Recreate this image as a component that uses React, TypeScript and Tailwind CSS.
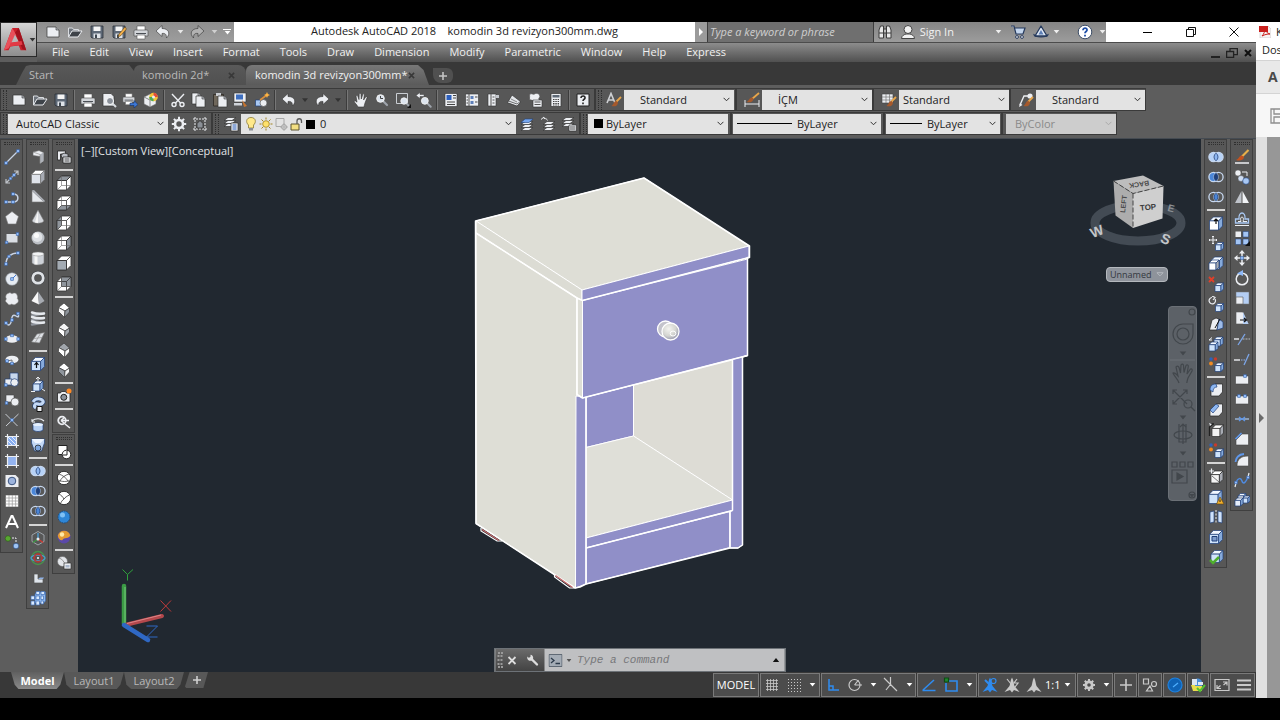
import type { ReactNode } from "react";

const W = "#eceef2";
const B = "#a9c8f2";
const N = "#1f3f78";

// small isometric solid used by most of the modeling icons
const Box = ({ x = 2, y = 2, s = 12, top = "#ffffff", front = "#dfe3ea", side = "#a7abb3", line = "#2b2b2b" }: any) => {
  const d = s * 0.3;
  return (
    <g stroke={line} strokeWidth=".7" strokeLinejoin="round">
      <path d={`M${x} ${y + d}l${d} ${-d}h${s - d}l${-d} ${d}z`} fill={top} />
      <path d={`M${x} ${y + d}h${s - d}v${s - d}h${-(s - d)}z`} fill={front} />
      <path d={`M${x + s - d} ${y + d}l${d} ${-d}v${s - d}l${-d} ${d}z`} fill={side} />
    </g>
  );
};

const BlueBox = (p: any) => <Box top="#f2f8ff" front="#cfe3fa" side="#86aadb" line={N} {...p} />;

const ViewBox3d = ({ face }: { face: string }) => (
  <g stroke="#333" strokeWidth=".8" strokeLinejoin="round">
    <path d="M1 5.500L5.500 1H15v9.500L10.500 15H1z" fill="#fff" />
    {face === "top" && <path d="M1 5.500L5.500 1H15l-4.500 4.500z" fill="#8f959c" />}
    {face === "bottom" && <path d="M1 15l4.500-4.500H15L10.500 15z" fill="#8f959c" />}
    {face === "left" && <path d="M1 5.500L5.500 1v9.500L1 15z" fill="#8f959c" />}
    {face === "right" && <path d="M10.500 5.500L15 1v9.500L10.500 15z" fill="#8f959c" />}
    {face === "front" && <path d="M1 5.500h9.500V15H1z" fill="#a3abb3" />}
    {face === "back" && <path d="M5.500 1H15v9.500H5.500z" fill="#8f959c" />}
    <path d="M1 5.500h9.500V15M10.500 5.500L15 1" fill="none" />
    {face !== "front" && <path d="M5.500 1v9.500H15M5.500 10.500L1 15" fill="none" stroke="#666" strokeWidth=".6" />}
  </g>
);

const Iso = ({ a, b, c }: { a: string; b: string; c: string }) => (
  <g stroke="#3a3a3a" strokeWidth=".7" strokeLinejoin="round">
    <path d="M8 1l5.500 5L9 9 2.500 5.500z" fill={a} />
    <path d="M2.500 5.500L9 9l-.500 6.500-6-6z" fill={b} />
    <path d="M13.500 6v4l-5 5.500L9 9z" fill={c} />
  </g>
);

const Union = ({ l, r, m }: { l: string; r: string; m: string }) => (
  <g stroke="#c7d8f0" strokeWidth="1.300">
    <circle cx="5.500" cy="8" r="4.600" fill={l} />
    <circle cx="10.500" cy="8" r="4.600" fill={r} />
    <path d="M8 4.200a4.600 4.600 0 0 1 0 7.600 4.600 4.600 0 0 1 0-7.600z" fill={m} strokeWidth=".8" stroke={N} />
  </g>
);

const Page = ({ x = 2, y = 2 }) => (
  <g transform={`translate(${x} ${y})`}>
    <path d="M0 0h6l3 3v8H0z" fill={W} stroke="#333" strokeWidth=".7" />
    <path d="M6 0v3h3" fill="#b6bac0" stroke="#333" strokeWidth=".6" />
  </g>
);

const Floppy = () => (
  <>
    <path d="M2 2h12v12H3l-1-1z" fill="#5e6977" stroke="#2c3138" strokeWidth=".8" />
    <path d="M4.500 2.500h7v4.500h-7z" fill="#f4f4f4" />
    <path d="M4.500 9.500h7V14h-7z" fill="#dfe3e8" />
    <path d="M6 10.500h2V14H6z" fill="#3d4650" />
  </>
);

const Printer = () => (
  <>
    <path d="M4 2h8v5H4z" fill="#fff" stroke="#555" strokeWidth=".6" />
    <path d="M1 7q0-1 1-1h12q1 0 1 1v5H1z" fill="#d3d6da" stroke="#444" strokeWidth=".6" />
    <path d="M3 9h10v1H3z" fill="#4b4f55" />
    <path d="M4 11h8v4H4z" fill="#fff" stroke="#555" strokeWidth=".6" />
  </>
);

const Lens = ({ x = 0, y = 0 }) => (
  <g transform={`translate(${x} ${y})`}>
    <path d="M9 9l4 4" stroke="#9ea4ac" strokeWidth="2.200" strokeLinecap="round" />
    <circle cx="6.500" cy="6.500" r="3.800" fill="#dce4ee" stroke="#f4f4f4" strokeWidth="1" />
  </g>
);

const Brush = () => (
  <>
    <path d="M15 5L10 10" stroke="#e8a64a" strokeWidth="1.800" />
    <path d="M10.500 9c-3 0-2.500 3.500-5 5 3 1 6.500 0 6.500-3.500z" fill="#a5592c" />
  </>
);

const Undo = ({ c = W }) => <path d="M7 1.500L1 7l6 5.500V9.500c3-.5 4.500.5 4.500 4.500 4.500-4.500 2-9.500-4.500-9.500z" fill={c} stroke="#333" strokeWidth=".6" />;

const Layers = ({ x = 0, y = 0 }) => (
  <g transform={`translate(${x} ${y})`} fill={W} stroke="#333" strokeWidth=".7">
    <path d="M1 12.500l4-3h8l-4 3z" />
    <path d="M1 9.500l4-3h8l-4 3z" />
    <path d="M1 6.500l4-3h8l-4 3z" />
  </g>
);

const Node = ({ x, y }: { x: number; y: number }) => (
  <rect x={x - 1.3} y={y - 1.3} width="2.600" height="2.600" fill="#8fb9f7" stroke="#3a66ab" strokeWidth=".6" />
);

const icons: Record<string, ReactNode> = {
  "new": <><path d="M2 3h9l3 3v7H2z" fill={W} stroke="#333" strokeWidth=".7" /><path d="M11 3v3h3" fill="#aeb2b8" stroke="#333" strokeWidth=".6" /></>,
  "open": <><path d="M1.500 13V4h4l1 1.500h5V7" fill="#6d737b" stroke="#d9dce0" /><path d="M1.500 13L5 7h10l-4 6z" fill="#3e4349" stroke={W} /></>,
  "save": <Floppy />,
  "save as": <><Floppy /><path d="M14 3L8 10l-1 3 3-1.500L15.500 5z" fill="#f3b04a" stroke="#59421d" strokeWidth=".6" /></>,
  "print": <Printer />,
  "plot preview": <><path d="M2 1.500h8l3 3V14H2z" fill={W} stroke="#333" strokeWidth=".7" /><g transform="translate(2.500 2.500)"><path d="M9 9l3.500 3.500" stroke="#d7dbe0" strokeWidth="2" /><circle cx="6.500" cy="6.500" r="3.500" fill="#8a9099" stroke="#fff" /></g></>,
  "publish": <><g transform="scale(.85)"><Printer /></g><path d="M8 11h4V8.500l4 4-4 3.500v-2.500H8z" fill="#3c77d6" stroke="#17325f" strokeWidth=".6" /></>,
  "3d print": <><path d="M1 5l6-3 6 3v7l-6 3-6-3z" fill={W} stroke="#666" strokeWidth=".6" /><path d="M1 5l6 3v7M7 8l6-3" stroke="#888" fill="none" /><circle cx="10.500" cy="5" r="4.300" fill="#f5c437" /><path d="M10.500.7a4.300 4.300 0 0 1 4.300 4.300h-4.300z" fill="#e14b3c" /><path d="M6.200 5a4.300 4.300 0 0 0 4.300 4.300V5z" fill="#48a85a" /><circle cx="10.500" cy="5" r="1.500" fill={W} /></>,
  "cut": <g fill="none" stroke={W} strokeWidth="1.400"><path d="M2 2l8.500 9M14 2L5.500 11" /><circle cx="4" cy="12.500" r="2" /><circle cx="12" cy="12.500" r="2" /></g>,
  "copy": <><Page x={1} y={1} /><Page x={5} y={4} /></>,
  "paste": <><path d="M1.500 2.500h10V14h-10z" fill="#6f675b" stroke="#2d2a25" strokeWidth=".8" /><path d="M4 1h5v3H4z" fill="#c9ccd1" /><Page x={6} y={4} /></>,
  "match": <><path d="M1 1h12v9H1z" fill={W} stroke="#333" strokeWidth=".6" /><path d="M3 2.500h7v5H3z" fill="#3e6fc0" /><path d="M1 11h8v2.500H1z" fill="#cfd3d9" /><path d="M9 8l5 6-3 1z" fill="#c8752f" /></>,
  "block": <><path d="M1.500 8h6v6h-6z" fill={B} stroke={N} strokeWidth=".7" /><circle cx="9.500" cy="11" r="3.500" fill={W} stroke="#555" strokeWidth=".7" /><path d="M6 8l7-5" stroke="#d98f3d" strokeWidth="1.600" /><path d="M13 0l.9 2.100L16 3l-2.100.9L13 6l-.9-2.100L10 3l2.100-.9z" fill="#ffb443" /></>,
  "undo": <Undo />,
  "redo": <g transform="matrix(-1 0 0 1 16 0)"><Undo /></g>,
  "redo off": <g transform="matrix(-1 0 0 1 16 0)"><Undo c="#b2b2b2" /></g>,
  "pan": <path d="M5 15c-1-2.500-3.500-4-4-6 1-.8 2 .2 3 1.200L3 4c.8-1 1.800-.4 2 .6l1 3L6.200 2c.6-1 1.600-.8 1.800.2L8.300 7l1.500-4.800c.8-.8 1.600-.2 1.500.8L10.600 8l2.200-3.200c.9-.5 1.500.2 1.200 1L12 11c-.5 1.500-.8 3-1 4z" fill={W} stroke="#333" strokeWidth=".6" />,
  "zoom": <><Lens /><path d="M6.500 4v2.500H9" stroke="#444" fill="none" /></>,
  "zoom window": <><path d="M1.500 1.500h11v10h-11z" fill="none" stroke="#c9cdd2" /><g transform="translate(3.500 3.500) scale(.85)"><Lens /></g><path d="M16 12v4h-4z" fill="#111" /></>,
  "zoom previous": <><g transform="translate(3 3) scale(.9)"><Lens /></g><path d="M0 3.500L4 .5v2h4v2H4v2z" fill={W} stroke="#444" strokeWidth=".5" /></>,
  "properties": <><path d="M2 1.500h12v13H2z" fill={W} stroke="#333" strokeWidth=".6" /><path d="M3.500 3h5v5h-5z" fill="#2c5fbd" /><path d="M10 3.500h3M10 6h3M4 10h8M4 12.500h8" stroke="#444" /></>,
  "design center": <><path d="M1.500 2h13v12h-13z" fill={W} stroke="#333" strokeWidth=".6" /><path d="M5 2v12" stroke="#555" /><path d="M6.500 4h3v3h-3zM6.500 9h3v3h-3z" fill="#5d7fb9" /><path d="M11 5h2.500M11 10h2.500M2.500 5h1.500M2.500 8h1.500M2.500 11h1.500" stroke="#444" /></>,
  "tool palettes": <><path d="M3 2h8v12H3z" fill={W} stroke="#333" strokeWidth=".6" /><path d="M11 3h3v3h-3z" fill="#c5c9cf" /><path d="M6 2v12M7.500 5h2M7.500 8h2M7.500 11h2" stroke="#555" /></>,
  "sheet set": <><path d="M1 10.500L5 7l10 3-4 4z" fill={W} stroke="#333" strokeWidth=".7" /><path d="M2.500 9L6 3l8.500 6.500-3.500 2.500z" fill="#e2e5e9" stroke="#333" strokeWidth=".7" /><path d="M5 7l6 3" stroke="#888" /></>,
  "markup": <><path d="M3 2c2-1 3 1 4.500 0S11 1 12.500 3 11 6 12 7.500 8 9 6 8.500 2 8 2.500 6 2 3 3 2z" fill={W} stroke="#555" strokeWidth=".7" /><path d="M6 8h9v7H6z" fill={W} stroke="#333" strokeWidth=".6" /><path d="M7.500 10h6M7.500 12.500h6" stroke="#555" /></>,
  "calculator": <><path d="M3 1.500h10v13H3z" fill={W} stroke="#333" strokeWidth=".7" /><path d="M4.500 3h7v2.500h-7z" fill="#5f6a77" /><path d="M5 7.500h6M5 9.500h6M5 11.500h6M5 13h6" stroke="#444" strokeDasharray="1.500 .8" /></>,
  "help": <><path d="M2 2h12v12H2z" fill={W} stroke="#222" /><path d="M6 6c0-3 4.500-2.500 4 0-.3 1.400-2 1.300-2 3M8 10.500v1.700" fill="none" stroke="#222" strokeWidth="1.600" /></>,
  "text style": <><path d="M1 11L5 1.500 9 11M2.500 8h5" fill="none" stroke="#cfd1d4" strokeWidth="1.600" /><Brush /></>,
  "dim style": <><path d="M1 8v7M15 8v7M1 12h14" stroke={W} /><path d="M15 1L8 7" stroke="#e8a64a" strokeWidth="1.800" /><path d="M8 5.500c-3 0-3 3.500-5.500 4.500 3 1 7 0 7-3.500z" fill="#a5592c" /></>,
  "table style": <><path d="M1 2h11v9H1z" fill={W} stroke="#444" strokeWidth=".6" /><path d="M1 5h11M1 8h11M5 2v9M8.500 2v9" stroke="#777" strokeWidth=".7" /><Brush /></>,
  "leader style": <><path d="M2 13L6 4h4" stroke={W} strokeWidth="1.400" fill="none" /><circle cx="12" cy="4" r="2.600" fill={W} /><path d="M1 15l1-4 2.500 2z" fill={W} /><Brush /></>,
  "gear": <><circle cx="8" cy="8" r="4" fill="none" stroke={W} strokeWidth="2.600" /><g fill={W}><path d="M7 .8h2v3H7zM7 12.200h2v3H7zM.8 7h3v2h-3zM12.200 7h3v2h-3z" /><g transform="rotate(45 8 8)"><path d="M7 .8h2v3H7zM7 12.200h2v3H7zM.8 7h3v2h-3zM12.200 7h3v2h-3z" /></g></g></>,
  "workspace": <><path d="M1 3h14M1 13h14M3 1v14M13 1v14" stroke={W} strokeDasharray="2 1" /><path d="M5 7.500L8 4.500l3 3V12H5z" fill="#8a8f96" stroke="#222" strokeWidth=".7" /></>,
  "layer properties": <><Layers y={-2} /><path d="M8 7h7v8H8z" fill={W} stroke="#333" strokeWidth=".7" /><path d="M9.500 9h4M9.500 11h4M9.500 13h4" stroke="#2f62bd" /></>,
  "make current": <><Layers x={1} y={2} /><path d="M6 3h8l-4 3.500H2z" fill="#76a6ee" stroke={N} strokeWidth=".6" /></>,
  "layer previous": <><Layers x={2} y={2} /><path d="M1 3.500L4 1v1.500c2 0 3 .5 3.500 2" fill="none" stroke={W} /></>,
  "layer states": <><Layers y={-2} /><path d="M8 9h7.500v6H8z" fill={W} stroke="#333" strokeWidth=".7" /><path d="M9 11h5.500M9 13h5.500" stroke="#555" /></>,

  "line": <><path d="M2 14L14 2" stroke="#c7d3e6" strokeWidth="1.200" /><Node x={2} y={14} /><Node x={14} y={2} /></>,
  "construction line": <><path d="M2 14L14 2M2 10v4h4M10 2h4v4" stroke="#c0c4ca" strokeWidth="1.200" fill="none" /><Node x={6.500} y={9.500} /><Node x={10} y={6} /></>,
  "polyline": <><path d="M2 12h7c6.500 0 6.500-8 0-8" fill="none" stroke="#c7d3e6" strokeWidth="1.500" /><Node x={2} y={12} /><Node x={9} y={12} /><Node x={9} y={4} /></>,
  "polygon": <path d="M8 1.500L14.500 6.500 12 14H4L1.500 6.500z" fill={W} stroke="#777" strokeWidth=".6" />,
  "rectangle": <><path d="M2.500 4h11v8.500h-11z" fill="#dadee4" /><Node x={2.500} y={12.500} /><Node x={13.500} y={4} /></>,
  "arc": <><path d="M2 14C2 7 7 3 14 3" fill="none" stroke="#c7d3e6" strokeWidth="1.500" /><Node x={2} y={14} /><Node x={5} y={6.500} /><Node x={14} y={3} /></>,
  "circle": <><circle cx="8" cy="8" r="6.300" fill="#e6ebf2" stroke="#8a9098" strokeWidth=".6" /><path d="M8 8l4-4" stroke="#3c77d6" /><Node x={8} y={8} /></>,
  "cloud": <path d="M4 2.500c2-1.500 3 0 4 .3 1.500-1.200 4.500-1 5 1.200.8 1.500.5 2.500.3 3.500 1.700 1.500 1.200 4.500-1 5-1.300 1.600-3.300 1.500-4.500.5-1.500 1.300-4 1-4.500-1C1 11 1.200 9 2.500 8 1 6 2 3 4 2.500z" fill={W} stroke="#888" strokeWidth=".5" />,
  "spline": <><path d="M2 12c3 4 5 1 5.500-3S9 3 12 5s3 0 2-3" fill="none" stroke="#c7d3e6" strokeWidth="1.500" /><Node x={2} y={12} /><Node x={8} y={9} /><Node x={14} y={2.500} /></>,
  "ellipse": <><ellipse cx="8" cy="8" rx="6.500" ry="3.800" fill={W} /><Node x={1.800} y={8} /><Node x={14.200} y={8} /><Node x={8} y={4.500} /></>,
  "ellipse arc": <><ellipse cx="8" cy="7.500" rx="6.500" ry="3.800" fill={W} /><path d="M3 9l5-1v4" stroke="#555" fill="none" strokeWidth=".8" /><Node x={3} y={9} /><Node x={8} y={11.500} /></>,
  "insert block": <><path d="M6 1h8v8H6z" fill="#c8d8ee" stroke={N} strokeWidth=".7" /><path d="M1 7h7v6H1z" fill={W} stroke={N} strokeWidth=".7" /><circle cx="10.500" cy="10.500" r="3.800" fill={W} stroke={N} strokeWidth=".7" /><Node x={1.800} y={13} /></>,
  "make block": <><path d="M2 3h8v7H2z" fill={W} stroke="#444" strokeWidth=".6" /><circle cx="11" cy="10" r="4" fill={W} stroke="#555" strokeWidth=".7" /><Node x={2.500} y={11} /></>,
  "point": <><path d="M1.500 2l12 12M14.500 2L2 14" stroke="#c9cdd3" /><Node x={8} y={8} /></>,
  "hatch": <><path d="M4 4h8v8H4z" fill="#89aef0" /><path d="M4 8l4 4M4 4l8 8M8 4l4 4" stroke="#fff" strokeWidth=".8" /><path d="M1 3.500h14M1 12.500h14M3.500 1v14M12.500 1v14" stroke={W} strokeWidth="1.200" /></>,
  "gradient": <><path d="M4 4h8v8H4z" fill="#94b4f0" /><path d="M1 3.500h14M1 12.500h14M3.500 1v14M12.500 1v14" stroke={W} strokeWidth="1.200" /></>,
  "region": <><path d="M1.500 2h10l3 3v9h-13z" fill={W} /><circle cx="8" cy="8" r="3.800" fill="#9db4dd" stroke="#3b5480" /></>,
  "table": <><path d="M1.500 2h13v12h-13z" fill="#fff" stroke="#555" strokeWidth=".6" /><path d="M1.500 5h13M1.500 8h13M1.500 11h13M5 2v12M8.300 2v12M11.600 2v12" stroke="#999" strokeWidth=".7" /></>,
  "mtext": <path d="M2 14L7.500 2h1L14 14M4 10h8" fill="none" stroke="#fff" strokeWidth="2" />,
  "add selected": <><circle cx="4" cy="4.500" r="2.800" fill="#58a832" stroke="#2b5c14" strokeWidth=".6" /><path d="M8 4h4v4" fill="none" stroke={W} strokeDasharray="2 1" /><circle cx="12" cy="12" r="2.800" fill="#9fc4f4" stroke={N} strokeWidth=".6" /></>,

  "polysolid": <><path d="M3 3l6-1.500 4.500 2v8.500L10 14.500V7.500L3 6.500z" fill={W} stroke="#666" strokeWidth=".6" /><path d="M10 5.500l3.500-2v8.500L10 14.500z" fill="#aeb2b9" /><path d="M10 5.500v9M3 3l7 2.500" stroke="#888" strokeWidth=".6" fill="none" /></>,
  "box": <Box x={1.500} y={1.500} s={13} line="#777" />,
  "wedge": <><path d="M2 1.500l12 11.500H2z" fill="#e6e9ed" stroke="#777" strokeWidth=".6" /><path d="M2 1.500l2-.500 11 11-1 1z" fill="#b0b4bb" /></>,
  "cone": <><path d="M8 1l6 11c-2 3-10 3-12 0z" fill="#d5d8dd" stroke="#777" strokeWidth=".6" /><path d="M8 2L5 13.500l3 .5z" fill="#f6f6f6" /></>,
  "sphere": <><circle cx="8" cy="8" r="6.500" fill="#bcc0c6" /><circle cx="7.300" cy="7" r="5" fill="#dfe2e6" /><circle cx="6.500" cy="5.500" r="2.500" fill="#fbfbfb" /></>,
  "cylinder": <><path d="M2 4v9c2 2.500 10 2.500 12 0V4z" fill="#cdd1d7" stroke="#777" strokeWidth=".6" /><path d="M4.500 5v9.500h3V5z" fill="#f6f6f6" /><ellipse cx="8" cy="4" rx="6" ry="2" fill="#f2f3f5" stroke="#888" strokeWidth=".5" /></>,
  "torus": <><circle cx="8" cy="8" r="5.200" fill="none" stroke="#44474c" strokeWidth="4" /><circle cx="8" cy="8" r="5.200" fill="none" stroke="#dfe2e6" strokeWidth="2.800" /></>,
  "pyramid": <><path d="M8 1.500L1.500 11 9 14.500z" fill="#f7f7f7" /><path d="M8 1.500L14.500 11 9 14.500z" fill="#a6aab1" /></>,
  "helix": <g strokeWidth="2.400" strokeLinecap="round"><path d="M2 5.500l12-2M2 10l12-2M2 14.500l12-2" stroke="#8f949c" /><path d="M2 2.500c3 1 8 1.500 12 1M2 7c3 1 8 1.500 12 1M2 11.500c3 1 8 1.500 12 1" stroke="#e6e9ed" fill="none" /></g>,
  "planar": <><path d="M1.500 12L7 4l7.500-1.500-5 10.500z" fill="#dde0e5" stroke="#777" strokeWidth=".6" /><path d="M4 8.500l8-1M10.500 3.500L5.500 12" stroke="#999" strokeWidth=".8" /></>,
  "extrude": <><BlueBox x={1.500} y={1.500} s={13} /><path d="M6.500 12V7M4.500 9l2-2.500 2 2.500" stroke="#111" strokeWidth="1.200" fill="none" /></>,
  "presspull": <><BlueBox x={3} y={4} s={10} /><path d="M8 5V0M6 2l2-2 2 2M1 14.500h4M12 12l3 2" stroke={W} fill="none" /></>,
  "sweep": <><path d="M3 5c3-5 9-3 10-1s-2 4-5 3-5 2-2 4" fill="none" stroke="#27406d" strokeWidth="4.500" /><path d="M3 5c3-5 9-3 10-1s-2 4-5 3-5 2-2 4" fill="none" stroke="#c3d8f5" strokeWidth="3" /><path d="M7 9.500h5v5H7z" fill={W} stroke="#111" /></>,
  "revolve": <><path d="M2 4c3-3 9-3 12 0" stroke={W} fill="none" strokeWidth="1.200" /><path d="M2 2v3h3" fill="none" stroke={W} /><path d="M3 7.500c3-2 7-2 10 0v5.500c-3 2-7 2-10 0z" fill="#b9d2f4" stroke={N} strokeWidth=".7" /><ellipse cx="8" cy="7.500" rx="5" ry="1.600" fill="#e6f0fd" /></>,
  "loft": <><path d="M1.500 2h13v4l-3 8h-7l-3-8z" fill="#c3d8f5" stroke={N} strokeWidth=".7" /><path d="M1.500 2l4 4h5l4-4z" fill="#eef5ff" /><circle cx="8" cy="11" r="3" fill="#7da6df" stroke="#111" strokeWidth=".7" /></>,
  "union": <Union l="#b7d2f7" r="#b7d2f7" m="#8db6f0" />,
  "subtract": <Union l="#4a86d8" r="none" m={N} />,
  "intersect": <Union l="none" r="none" m="#4a86d8" />,
  "3dmove": <><path d="M8 1.500l6 3.500v6.500L8 15l-6-3.500V5z" fill="none" stroke="#9ea3a9" /><path d="M8 9V3" stroke="#4fa5dd" strokeWidth="1.300" /><path d="M8 9l5 3.500" stroke="#cf3a32" strokeWidth="1.500" /><path d="M8 9l-5 3.500" stroke="#3d9442" strokeWidth="1.500" /><circle cx="8" cy="9" r="1.500" fill={W} /></>,
  "3drotate": <g fill="none" strokeWidth="1.400"><circle cx="8" cy="8" r="6.500" stroke="#49914c" /><ellipse cx="8" cy="8" rx="7" ry="3" stroke="#4a9ac9" /><circle cx="8" cy="8" r="3.800" stroke="#b63a34" strokeWidth="1.800" /><circle cx="8" cy="8" r="1" fill="#fff" stroke="none" /></g>,
  "3dalign": <><path d="M4 4h4v5h5v4H4z" fill="#dfe5ec" stroke="#555" strokeWidth=".7" /><path d="M8 9l2-1.500h4l-1 1.500z" fill="#8fb2e6" /></>,
  "3darray": <g fill="#d9eaff" stroke="#3f6db5" strokeWidth=".7"><path d="M5 4l2-2h8.500v9l-2 2H5z" fill="#8fb8ee" /><path d="M1 6h3.500v3.500H1zM6 6h3.500v3.500H6zM11 6h2.500v3.500H11zM1 11h3.500v4H1zM6 11h3.500v4H6zM11 11h2.500v3H11zM6 1.500h3.500v3H6zM11 1.500h3.500v3H11z" /></g>,

  "named views": <><path d="M1.500 2h8v3h-5v6h-3z" fill={W} stroke="#222" strokeWidth=".8" /><path d="M5 6l3-2 4 1v4H6z" fill="#b9bdc4" stroke="#222" strokeWidth=".7" /><path d="M7 8h8v6H7z" fill={W} stroke="#222" strokeWidth=".8" /><path d="M8.500 10h5M8.500 12h5" stroke="#444" /></>,
  "view top": <ViewBox3d face="top" />,
  "view bottom": <ViewBox3d face="bottom" />,
  "view left": <ViewBox3d face="left" />,
  "view right": <ViewBox3d face="right" />,
  "view front": <ViewBox3d face="front" />,
  "view back": <ViewBox3d face="back" />,
  "sw iso": <Iso a="#fff" b="#f2f2f2" c="#8e949b" />,
  "se iso": <Iso a="#f4f4f4" b="#fff" c="#a2a7ad" />,
  "ne iso": <Iso a="#a0a5ab" b="#fff" c="#fafafa" />,
  "nw iso": <Iso a="#fff" b="#8e949b" c="#f2f2f2" />,
  "camera": <><path d="M1.500 5h3l1-1.500h4l1 1.500H14v9H1.500z" fill={W} stroke="#222" strokeWidth=".8" /><circle cx="7.800" cy="9.300" r="3" fill="#8a9099" stroke="#222" /><circle cx="13" cy="3" r="2.500" fill="#ff8a26" /></>,
  "orbit": <><circle cx="6" cy="6.500" r="3.800" fill="none" stroke={W} strokeWidth="1.800" /><path d="M5 6.500h8M5 6.500l3-2.500M5 6.500l3 2.500M9 10l5 4" stroke={W} strokeWidth="1.600" /></>,
  "2d wireframe": <><path d="M2 1.500h9v9H2z" fill="#fff" stroke="#222" /><circle cx="10.500" cy="10.500" r="4.300" fill="#fff" stroke="#222" /><path d="M11 7v4H7" stroke="#222" fill="none" /></>,
  "3d wireframe": <><circle cx="8" cy="8" r="6.700" fill="#fff" stroke="#222" strokeWidth=".9" /><path d="M3 4c3 1 8 4 9.500 8M13 4C9 5 5 8 3.500 12M2 10c4 2 9 2 12 0" fill="none" stroke="#444" strokeWidth=".8" /></>,
  "3d hidden": <><circle cx="8" cy="8" r="6.700" fill="#fff" stroke="#222" strokeWidth=".9" /><path d="M3 4c2 1 4 3 5 5M13.500 5C11 6 9 7.500 8 9c-2 1.500-3 3-3.500 5" fill="none" stroke="#444" strokeWidth=".9" /></>,
  "realistic": <><circle cx="8" cy="8" r="6" fill="#2f86d6" stroke="#174a80" strokeDasharray="1.500 1" /><circle cx="6.500" cy="6" r="2.500" fill="#7fc0f4" /></>,
  "conceptual": <><circle cx="8" cy="8" r="6.500" fill="#5a48a8" /><path d="M1.800 6.500a6.500 6.500 0 0 1 12.500 0C13 10 8 8 6.500 11 5 12 2 10 1.800 6.500z" fill="#e39a33" /><circle cx="6" cy="5.500" r="2.200" fill="#ffe9a8" /></>,
  "manage styles": <><circle cx="6.500" cy="6.500" r="5" fill="#e3e6ea" stroke="#666" strokeWidth=".6" /><path d="M3 3c3 1 5 3 6 7" stroke="#999" fill="none" /><path d="M8 8h7v6H8z" fill={W} stroke="#333" strokeWidth=".7" /><path d="M9.500 10h4v2.500h-4z" fill="#a9b7cb" /></>,

  "extrude faces": <><BlueBox x={1.500} y={2} s={13} front="#fff" /><path d="M8 9V4.500M6 6l2-2 2 2" stroke="#111" strokeWidth="1.200" fill="none" /></>,
  "move faces": <><path d="M5 1v8M1 5h8M4 2l1-1 1 1M4 8l1 1 1-1M2 4L1 5l1 1M8 4l1 1-1 1" stroke={W} fill="none" /><BlueBox x={7.500} y={7.500} s={8} /></>,
  "offset faces": <><BlueBox x={3} y={1} s={12} /><Box x={1} y={4} s={10} front="#fff" line={N} /></>,
  "delete faces": <><path d="M1 1l5 5M6 1L1 6" stroke="#e0402a" strokeWidth="1.800" /><BlueBox x={7} y={7} s={8.500} /></>,
  "rotate faces": <><path d="M7 3a3.200 3.200 0 1 1-3-1.500M4 0l3 1.500-2 2.500" stroke={W} fill="none" strokeWidth="1.200" /><BlueBox x={7.500} y={7.500} s={8} /></>,
  "taper faces": <><path d="M1.500 14L4 4l4-2 3 1-2 11z" fill={W} stroke="#222" strokeWidth=".7" /><path d="M9 14l2-11 4 3v6z" fill="#9dbbe8" stroke={N} strokeWidth=".7" /><path d="M7 12l5-9" stroke="#111" /></>,
  "copy faces": <><BlueBox x={6} y={1} s={9} /><BlueBox x={1} y={6} s={9} /><path d="M1 4l3-2.500M1 4h3" stroke={W} fill="none" /></>,
  "color faces": <><circle cx="3" cy="3" r="1.700" fill="#2f62bd" /><circle cx="7.500" cy="3" r="1.700" fill="#c83a2c" /><circle cx="3" cy="7.500" r="1.900" fill="#f08a22" /><BlueBox x={7} y={7} s={8.500} /></>,
  "fillet edge": <><path d="M3 6l4-4h7.500v8L11 14H3z" fill={W} stroke="#222" strokeWidth=".7" /><path d="M2 8c0-4 2-6 6-6l1 3c-3 0-4 2-4 5z" fill="#8db6f0" stroke={N} strokeWidth=".7" /></>,
  "chamfer edge": <><path d="M2 8l6-6h6.500v8L11 14H2z" fill={W} stroke="#222" strokeWidth=".7" /><path d="M2 8l6-6 3 2-6 7z" fill="#8db6f0" stroke={N} strokeWidth=".7" /></>,
  "copy edges": <><Box x={4} y={3} s={11.500} front="#f2f2f2" /><path d="M1.500 14V5l3-2.500M1 2h5" stroke="#222" strokeWidth="1.300" fill="none" /><path d="M1 1l3 1-2 2z" fill={W} /></>,
  "imprint": <><Box x={3} y={3} s={12} front="#f4f4f4" /><path d="M1 3h5M3.500.500v5" stroke={W} strokeWidth="1.200" /><path d="M4 8l7 6" stroke="#555" strokeWidth=".8" /></>,
  "clean": <><BlueBox x={1} y={1.500} s={13} /><path d="M12 8l4 7H8.500z" fill="#f3b12c" stroke="#5e420b" strokeWidth=".6" /><path d="M12 10.500v2.500" stroke="#222" /></>,
  "separate": <><path d="M2 3l4-1v11l-4 1zM14 3l-4-1v11l4 1z" fill="#cfe2fa" stroke={N} strokeWidth=".7" /><path d="M8 1v14" stroke={W} strokeDasharray="2 1.500" /></>,
  "shell": <><BlueBox x={1.500} y={1.500} s={13} /><path d="M4 7.500h5v4.500H4z" fill="#7e9ccb" stroke={N} /></>,
  "check": <><BlueBox x={3} y={1.500} s={12} /><path d="M2 11l3 3 6-6" stroke="#4fae2d" strokeWidth="2.600" fill="none" /></>,

  "match brush": <><path d="M14.500 1L8 7.500" stroke="#e8b04a" strokeWidth="2.200" /><path d="M8 6.500c-3 0-3 3.500-6 4.500 4 1.500 8 0 8-3z" fill="#c2521f" /><path d="M1 14h14" stroke={W} strokeWidth="1.500" /></>,
  "copy objects": <><circle cx="4" cy="4" r="3" fill={W} stroke="#666" strokeWidth=".5" /><path d="M8 3h5v4" stroke={W} fill="none" /><circle cx="7" cy="9.500" r="3" fill="#cddcf2" stroke="#555" strokeWidth=".5" /><circle cx="12" cy="12" r="3.300" fill="#a8c7f3" stroke={N} strokeWidth=".6" /></>,
  "mirror": <><path d="M7.500 2v12H1z" fill="#bfc3ca" /><path d="M8.500 2v12H15z" fill="#f1f3f6" /></>,
  "offset": <><path d="M1.500 13V9H5c-1-8 7-8 6 0h3.500v4z" fill="none" stroke="#a9c8f2" strokeWidth="1.300" /><path d="M1 15.500h14M4 11.500h3c-2-6 4-6 2 0h4" fill="none" stroke={W} /></>,
  "array": <><path d="M1.500 1.500h5.500v5.500H1.500z" fill={W} /><path d="M9 1.500h5.500v5.500H9zM1.500 9h5.500v5.500H1.500zM9 9h5.500v5.500H9z" fill="#a3c4f3" stroke={N} strokeWidth=".5" /><path d="M16 11v5h-5z" fill="#111" /></>,
  "move": <><path d="M8 0l3 3.500H5zM8 16l3-3.500H5zM0 8l3.500-3v6zM16 8l-3.500-3v6z" fill={W} /><path d="M8 3v10M3 8h10" stroke={W} strokeWidth="1.500" /><Node x={8} y={8} /></>,
  "rotate": <><circle cx="8" cy="9" r="5.800" fill="none" stroke={W} strokeWidth="1.500" /><path d="M9 0v6L3 3.500z" fill="#8fb9f7" /></>,
  "scale": <><path d="M2 2h13v12H2z" fill="#b4cef4" stroke="#777" strokeWidth=".5" /><path d="M2 7h7v7H2z" fill={W} stroke="#555" strokeWidth=".6" /></>,
  "stretch": <><path d="M2 2h7l5.500 12H2z" fill={W} stroke="#555" strokeWidth=".6" /><path d="M9 2l5.500 12H9z" fill="#b4cef4" /><path d="M6 10h6M10 8l2.500 2L10 12" stroke="#111" strokeWidth="1.200" fill="none" /></>,
  "trim": <><path d="M0 8h5" stroke={W} strokeWidth="1.400" /><path d="M8.500 8H16" stroke="#b8bcc2" strokeDasharray="2 1" /><path d="M4 14L11 3" stroke="#7da6e8" strokeWidth="1.300" /></>,
  "extend": <><path d="M0 9h6" stroke={W} strokeWidth="1.400" /><path d="M7 9h5" stroke="#8fb0e6" strokeDasharray="1.500 1" strokeWidth="1.200" /><path d="M10 14l5-11" stroke="#7da6e8" strokeWidth="1.300" /></>,
  "break at point": <><path d="M1.500 5h13v8h-13z" fill={W} stroke="#444" strokeWidth=".6" /><Node x={11} y={5} /></>,
  "break": <><path d="M1.500 5h13v8h-13z" fill={W} stroke="#444" strokeWidth=".6" /><Node x={5} y={5} /><Node x={11} y={5} /></>,
  "join": <><path d="M1 8h14" stroke="#a9c8f2" strokeWidth="1.200" /><path d="M5 6l2.500 2L5 10M11 6L8.500 8 11 10" stroke="#5f97ea" fill="none" strokeWidth="1.300" /></>,
  "chamfer": <><path d="M2 14V9l6-6h6.500v11z" fill={W} stroke="#444" strokeWidth=".6" /><path d="M1.500 8L7.500 2" stroke="#5f97ea" strokeWidth="1.600" /></>,
  "fillet": <><path d="M3 14c0-7 4-10 11.500-10v10z" fill={W} stroke="#444" strokeWidth=".6" /><path d="M1.500 10C2 5 5 2.500 10 2" stroke="#5f97ea" strokeWidth="1.800" fill="none" /></>,
  "blend": <><path d="M2 11c2-6 5-5 6-2s3 3 6-4" stroke="#4f8be0" strokeWidth="1.500" fill="none" /><path d="M1 15l1-4M15 1l-1 4" stroke={W} strokeWidth="1.200" /><Node x={2} y={10.500} /><Node x={14} y={5.500} /></>,
  "explode": <><BlueBox x={4} y={1.500} s={8} front={W} /><BlueBox x={9} y={4} s={7} /><BlueBox x={1} y={6} s={8} front="#e6eefa" /></>,

  "binoculars": <><path d="M2 14V6l1.500-4h3v12zM9.500 14V2h3L14 6v8z" fill="#e9e9e9" stroke="#3c3c3c" /><path d="M6.500 5h3v4h-3zM2 9h4.500M9.500 9H14" stroke="#3c3c3c" fill="#bbb" /></>,
  "user": <><path d="M1.500 14.500c0-3 3-4 4.500-4.500h4c1.500.5 4.500 1.500 4.500 4.500z" fill="#f2f2f2" stroke="#444" /><circle cx="8" cy="5.500" r="4" fill="#f2f2f2" stroke="#444" /></>,
  "cart": <><path d="M1 2h3l2 8h7l2-6H5" fill="#c4d6ee" stroke="#25395c" strokeWidth="1.200" /><circle cx="7" cy="13" r="1.400" fill="#fff" stroke="#25395c" /><circle cx="12" cy="13" r="1.400" fill="#fff" stroke="#25395c" /></>,
  "a360": <><path d="M8 2l6 10H2z" fill="#dfe8f5" stroke="#25395c" strokeWidth="1.300" strokeLinejoin="round" /><path d="M8 6l2.500 4.500h-5z" fill="#5c7fb6" /><path d="M1 10c-1 4 15 4 14 0" stroke="#25395c" fill="none" strokeWidth="1.200" /></>,
  "help round": <><circle cx="8" cy="8" r="6.800" fill="#fff" stroke="#3b4c66" /><path d="M6 6.300c0-3 4.300-2.600 4-.2-.2 1.500-2 1.500-2 3.200M8 10.800v1.700" fill="none" stroke="#1f4fa8" strokeWidth="1.800" /></>,
};

const Icon = ({ name, className = "w-4 h-4" }: { name: string; className?: string }) => (
  <svg viewBox="0 0 16 16" className={`${className} shrink-0`} aria-hidden="true">{icons[name]}</svg>
);

const Drop = ({ className = "text-white" }: { className?: string }) => (
  <svg viewBox="0 0 8 5" className={`w-[7px] h-1 shrink-0 ${className}`} aria-hidden="true"><path d="M.5 0h7L4 4.500z" fill="currentColor" /></svg>
);

const Grip = () => <span className="w-[7px] h-5 shrink-0 flex justify-center"><span className="w-1 h-full border-x border-dotted border-[#2f2f2f]" /></span>;

function ToolRow({ items }: { items: string[] }) {
  return (
    <>
      {items.map((name, i) => {
        if (name === "|") return <span key={i} className="w-[6px] h-5 shrink-0 flex justify-center"><span className="w-[2px] bg-[#3c3c3c] border-r border-[#777]" /></span>;
        if (name === "v") return <button key={i} aria-label="list" className="w-3 h-5 shrink-0 flex items-center justify-center"><svg viewBox="0 0 8 5" className="w-[6px] h-1"><path d="M0 0h8L4 5z" fill="#333" /></svg></button>;
        return <button key={i} aria-label={name} className="w-[21px] h-5 shrink-0 flex items-center justify-center"><Icon name={name} /></button>;
      })}
    </>
  );
}

function Combo({ label, value, width, pad = "pl-[6px]", disabled = false, children }: { label: string; value: string; width: string; pad?: string; disabled?: boolean; children?: ReactNode }) {
  return (
    <div className={`relative h-5 shrink-0 flex items-center ${width} ${disabled ? "bg-[#cdcdcd] text-[#8a8a8a]" : "bg-[#e3e3e3] text-[#1c1c1c]"}`}>
      {children}
      <select aria-label={label} disabled={disabled} className={`appearance-none bg-transparent flex-1 min-w-0 h-5 text-[11px] leading-5 opacity-100 outline-none ${pad}`}>
        <option>{value}</option>
      </select>
      <svg viewBox="0 0 8 6" className="absolute right-1 w-[7px] h-[5px] pointer-events-none"><path d="M.5 1L4 4.500 7.500 1" fill="none" stroke={disabled ? "#aaa" : "#333"} strokeWidth="1.200" /></svg>
    </div>
  );
}

function Palette({ items, height, label, end = false }: { items: string[]; height: string; label: string; end?: boolean }) {
  return (
    <div role="toolbar" aria-label={label} className={`w-[23px] ${height} shrink-0 flex flex-col items-center bg-[#575757] border border-[#3f3f3f] ${end ? "mt-px" : ""}`}>
      <span className="h-[7px] w-4 shrink-0 flex items-center"><span className="w-full h-[3px] border-y border-dotted border-[#2f2f2f]" /></span>
      {items.map((name, i) =>
        name === "|" ? (
          <span key={i} className="h-[6px] w-[18px] shrink-0 flex items-center"><span className="w-full h-[2px] bg-[#d5d5d5]" /></span>
        ) : (
          <button key={i} aria-label={name} className="flex-1 min-h-0 w-full flex items-center justify-center"><Icon name={name} /></button>
        )
      )}
    </div>
  );
}

const drawTools = ["line", "construction line", "polyline", "polygon", "rectangle", "arc", "circle", "cloud", "spline", "ellipse", "ellipse arc", "insert block", "make block", "point", "hatch", "gradient", "region", "table", "mtext", "add selected"];
const modelTools = ["polysolid", "box", "wedge", "cone", "sphere", "cylinder", "torus", "pyramid", "helix", "planar", "|", "extrude", "presspull", "sweep", "revolve", "loft", "|", "union", "subtract", "intersect", "|", "3dmove", "3drotate", "3dalign", "3darray"];
const viewTools = ["named views", "|", "view top", "view bottom", "view left", "view right", "view front", "view back", "|", "sw iso", "se iso", "ne iso", "nw iso", "|", "camera", "|", "orbit"];
const styleTools = ["2d wireframe", "|", "3d wireframe", "3d hidden", "realistic", "conceptual", "|", "manage styles"];
const solidTools = ["union", "subtract", "intersect", "|", "extrude faces", "move faces", "offset faces", "delete faces", "rotate faces", "taper faces", "copy faces", "color faces", "|", "fillet edge", "chamfer edge", "copy edges", "color faces", "|", "imprint", "clean", "separate", "shell", "check"];
const modifyTools = ["match brush", "copy objects", "mirror", "offset", "array", "move", "rotate", "scale", "stretch", "trim", "extend", "break at point", "break", "join", "chamfer", "fillet", "blend", "explode"];
const standardTools = ["new", "open", "save", "|", "print", "plot preview", "publish", "3d print", "|", "cut", "copy", "paste", "match", "block", "|", "undo", "v", "redo", "v", "|", "pan", "zoom", "zoom window", "zoom previous", "|", "properties", "design center", "tool palettes", "sheet set", "markup", "calculator", "|", "help"];
const menus = ["File", "Edit", "View", "Insert", "Format", "Tools", "Draw", "Dimension", "Modify", "Parametric", "Window", "Help", "Express"];

function Header() {
  return (
    <header className="flex h-10 shrink-0">
      <button aria-label="Application menu" className="w-[37px] h-[35px] shrink-0 relative z-10 flex items-center bg-linear-to-b from-[#d6d6d6] to-[#8d8d8d] border border-[#2a2a2a]">
        <svg viewBox="0 0 28 30" className="w-[26px] h-[28px] ml-[2px]" aria-hidden="true">
          <path d="M1 26L10 2h7l8 24h-6l-2-5-9 1-2 4z" fill="#c8202b" />
          <path d="M10 2l-9 24 5-2L14 9z" fill="#e8505a" />
          <path d="M13 9l-4 9 8-1z" fill="#b9b9b9" />
          <path d="M17 2l8 24-4-1-8-18z" fill="#a0121d" />
          <path d="M8 18l12-2 1 4-14 2z" fill="#e23a45" />
        </svg>
        <Drop className="text-[#333]" />
      </button>
      <div className="flex-1 min-w-0 flex flex-col">
        <div className="flex h-5 bg-white">
          <div className="w-[197px] shrink-0 flex items-center pl-[5px] bg-linear-to-b from-[#8e8e8e] to-[#9d9d9d]">
            {["new", "open", "save", "save as", "print", "undo"].map((n) => (
              <button key={n} aria-label={n} className="w-[22px] flex justify-center"><Icon name={n} /></button>
            ))}
            <button aria-label="undo list" className="w-3 flex justify-center"><Drop className="text-[#e8e8e8]" /></button>
            <button aria-label="redo" className="w-[22px] flex justify-center"><Icon name="redo off" /></button>
            <button aria-label="redo list" className="w-3 flex justify-center"><Drop className="text-[#d0d0d0]" /></button>
            <button aria-label="customize" className="w-[14px] flex flex-col items-center gap-px"><span className="w-2 h-px bg-white" /><Drop /></button>
          </div>
          <h1 className="flex-1 text-center whitespace-pre text-[11px] leading-[18px] text-[#222]">Autodesk AutoCAD 2018    komodin 3d revizyon300mm.dwg</h1>
          <button aria-label="search scope" className="w-3 shrink-0 bg-[#9b9b9b] flex items-center justify-center"><svg viewBox="0 0 4 8" className="w-1 h-2"><path d="M0 0l4 4-4 4z" fill="#fff" /></svg></button>
          <input aria-label="Search" placeholder="Type a keyword or phrase" className="w-[167px] shrink-0 px-[2px] bg-[#6f6f6f] border-x border-[#3d3d3d] text-[11px] italic text-white placeholder:text-[#cfcfcf] outline-none" />
          <div className="w-[232px] shrink-0 flex items-center bg-linear-to-b from-[#858585] to-[#9c9c9c] text-[#f2f2f2]">
            <button aria-label="find" className="w-[22px] flex justify-center"><Icon name="binoculars" /></button>
            <button className="flex items-center gap-1 w-[96px] text-[11px] pl-1"><Icon name="user" />Sign In</button>
            <button aria-label="sign in list" className="w-4 flex justify-center"><Drop className="text-[#eee]" /></button>
            <button aria-label="store" className="w-6 flex justify-center"><Icon name="cart" /></button>
            <button aria-label="a360" className="w-[22px] flex justify-center"><Icon name="a360" /></button>
            <button aria-label="a360 list" className="w-[10px] flex justify-center"><Drop className="text-[#eee]" /></button>
            <button aria-label="help" className="w-[42px] flex justify-center pl-[6px]"><Icon name="help round" /></button>
            <button aria-label="help list" className="-ml-1"><Drop className="text-[#eee]" /></button>
          </div>
          <div className="w-[150px] shrink-0 flex items-center justify-around pl-5 text-black">
            <button aria-label="minimize" className="w-[42px] h-4 flex items-center justify-center"><span className="w-[9px] h-px bg-black" /></button>
            <button aria-label="restore" className="w-[42px] flex justify-center"><svg viewBox="0 0 10 10" className="w-[10px] h-[10px]"><path d="M.5 2.500h7v7h-7zM2.500 2.500v-2h7v7h-2" fill="none" stroke="#111" /></svg></button>
            <button aria-label="close" className="w-[42px] flex justify-center"><svg viewBox="0 0 10 10" className="w-[10px] h-[10px]"><path d="M.5.5l9 9M9.500.5l-9 9" stroke="#111" /></svg></button>
          </div>
        </div>
        <nav className="flex items-center gap-5 h-5 pl-[15px] pr-[4px] border-t border-[#4c4c4c] bg-linear-to-b from-[#8d8d8d] to-[#505050] text-[11px] text-[#f1f1f1]">
          {menus.map((m) => <button key={m}>{m}</button>)}
          <div className="ml-auto flex items-center gap-[6px]">
            <button aria-label="minimize drawing" className="w-[9px] h-[10px] flex items-end"><span className="w-full h-[2px] bg-[#222]" /></button>
            <button aria-label="restore drawing"><svg viewBox="0 0 12 10" className="w-3 h-[10px]"><path d="M.6 3.500h7v6h-7zM4 3.500V.6h7.400v6H8" fill="none" stroke="#222" strokeWidth="1.300" /></svg></button>
            <button aria-label="close drawing"><svg viewBox="0 0 8 8" className="w-2 h-2"><path d="M1 1l6 6M7 1L1 7" stroke="#111" strokeWidth="2" /></svg></button>
          </div>
        </nav>
      </div>
    </header>
  );
}

const TabClose = () => <button aria-label="close tab" className="shrink-0"><svg viewBox="0 0 8 8" className="w-[7px] h-[7px]"><path d="M1 1l6 6M7 1L1 7" stroke="#383838" strokeWidth="1.800" /></svg></button>;

function FileTabs() {
  return (
    <div className="flex items-end h-[23px] shrink-0 bg-[#383838] pl-4 text-[11px] whitespace-nowrap">
      <button className="w-[118px] h-5 pl-[13px] text-left bg-linear-to-b from-[#595959] to-[#505050] text-[#b9b9b9] [clip-path:polygon(0_100%,6px_40%,10px_5%,14px_0,96%_0,100%_30%,100%_100%)]">Start</button>
      <div className="w-[112px] h-5 pl-2 pr-[11px] flex items-center justify-between bg-linear-to-b from-[#595959] to-[#505050] text-[#b9b9b9] rounded-tr-lg rounded-tl-md"><button>komodin 2d*</button><TabClose /></div>
      <div className="w-[183px] h-5 pl-[9px] pr-[14px] flex items-center justify-between bg-linear-to-b from-[#787878] to-[#5b5b5b] text-[#f0f0f0] rounded-tl-md [clip-path:polygon(0_100%,0_0,94%_0,97%_25%,100%_100%)]"><button>komodin 3d revizyon300mm*</button><TabClose /></div>
      <button aria-label="new tab" className="w-5 h-[15px] mb-[2px] ml-1 flex items-center justify-center bg-[#505050] rounded-r-md rounded-bl-lg"><svg viewBox="0 0 8 8" className="w-2 h-2"><path d="M4 0v8M0 4h8" stroke="#c4c4c4" strokeWidth="1.600" /></svg></button>
    </div>
  );
}

function Toolbars() {
  const strip = "flex items-center h-[23px] shrink-0 border border-[#3a3a3a] bg-[#575757]";
  return (
    <div className="h-[54px] shrink-0 flex flex-col gap-px pt-[3px] bg-[#5d5d5d] border-b border-[#454b52]">
      <div className="flex">
        <div className={`${strip} w-[595px]`}><Grip /><ToolRow items={standardTools} /></div>
        <div className={`${strip} w-[141px]`}><Grip /><ToolRow items={["text style"]} /><Combo label="Text style" value="Standard" width="w-[110px]" pad="pl-4" /></div>
        <div className={`${strip} w-[137px]`}><span className="w-1" /><ToolRow items={["dim style"]} /><Combo label="Dimension style" value="İÇM" width="w-[110px]" pad="pl-4" /></div>
        <div className={`${strip} w-[137px]`}><span className="w-1" /><ToolRow items={["table style"]} /><Combo label="Table style" value="Standard" width="w-[110px]" pad="pl-1" /></div>
        <div className={`${strip} w-[136px]`}><span className="w-1" /><ToolRow items={["leader style"]} /><Combo label="Leader style" value="Standard" width="w-[109px]" pad="pl-4" /></div>
      </div>
      <div className="flex">
        <div className={`${strip} w-[212px]`}><Grip /><Combo label="Workspace" value="AutoCAD Classic" width="w-[160px]" pad="pl-[8px]" /><ToolRow items={["gear", "workspace"]} /></div>
        <div className={`${strip} w-[368px]`}>
          <Grip />
          <ToolRow items={["layer properties"]} />
          <Combo label="Layer" value="0" width="w-[275px]" pad="pl-[3px]">
            <svg viewBox="0 0 74 16" className="w-[74px] h-4 ml-[2px] shrink-0" aria-hidden="true">
              <path d="M8 1.500c-5 0-5.500 5-2.500 7.500V12h5V9c3-2.500 2.500-7.500-2.500-7.500z" fill="#ffe98a" stroke="#8a7a36" strokeWidth=".8" />
              <path d="M6 12h4v2.500H6z" fill="#8b8f95" />
              <circle cx="23" cy="8" r="3.300" fill="#ffe16b" stroke="#a18321" strokeWidth=".8" />
              <path d="M23 1.500v2M23 12.500v2M16.500 8h2M27.500 8h2M18.500 3.500l1.500 1.500M26 11l1.500 1.500M27.500 3.500L26 5M20 11l-1.500 1.500" stroke="#a18321" />
              <path d="M33 2.500h8v8h-8z" fill="none" stroke="#a8a8a8" />
              <circle cx="41" cy="11" r="2.500" fill="#dcdcdc" stroke="#a0a0a0" /><path d="M41 7v8M37 11h8" stroke="#b0b0b0" />
              <path d="M48 8h8v6h-8z" fill="#f3df82" stroke="#5c5431" /><path d="M54 8V5c0-3 4.500-3 4.500 0v2" fill="none" stroke="#5c5c5c" strokeWidth="1.300" />
              <path d="M63 4h9v9h-9z" fill="#000" />
            </svg>
          </Combo>
          <ToolRow items={["make current", "layer previous", "layer states"]} />
        </div>
        <div className={`${strip} w-[151px]`}><Grip /><Combo label="Color" value="ByLayer" width="w-[140px]" pad="pl-[3px]"><span className="w-[9px] h-[9px] ml-[6px] bg-black shrink-0" /></Combo></div>
        <div className={`${strip} w-[153px]`}><span className="w-px" /><Combo label="Linetype" value="ByLayer" width="w-[148px]" pad="pl-[5px]"><span className="w-[55px] h-px ml-1 bg-black shrink-0" /></Combo></div>
        <div className={`${strip} w-[118px]`}><span className="w-px" /><Combo label="Lineweight" value="ByLayer" width="w-[114px]" pad="pl-[5px]"><span className="w-8 h-px ml-1 bg-black shrink-0" /></Combo></div>
        <div className={`${strip} w-[115px]`}><span className="w-[3px]" /><Combo label="Plot style" value="ByColor" width="w-[110px]" pad="pl-[9px]" disabled /></div>
      </div>
    </div>
  );
}

function Nightstand() {
  const cream = "#deded6";
  const violet = "#908fc8";
  return (
    <svg viewBox="470 170 290 430" className="absolute left-[392px] top-[31px] w-[290px] h-[430px]" role="img" aria-label="komodin model">
      <defs>
        <radialGradient id="knob" cx=".4" cy=".35" r=".75">
          <stop offset="0" stopColor="#f4f4f0" />
          <stop offset=".55" stopColor="#d3d4d0" />
          <stop offset="1" stopColor="#8082a0" />
        </radialGradient>
      </defs>
      <g stroke="#fff" strokeWidth="1" strokeLinejoin="round">
        <path d="M476 233L577 298V396L575.500 588 476 523.500z" fill={cream} />
        <path d="M476 221L644 178 749 246 582 290z" fill={cream} />
        <path d="M476 221L582 290V301L476 233z" fill="#dcdcd4" />
        <path d="M582 290L749 246V257.500L582 301z" fill={violet} />
        <path d="M586 397V447.500L633.500 436V385z" fill={violet} />
        <path d="M633.500 385L732.500 360V500L633.500 436z" fill="#dddcd5" />
        <path d="M586 447.500L633.500 436 732.500 500 586 538z" fill="#dfdfd8" />
        <path d="M586 538L732.500 500V510.500L586 548z" fill={violet} />
        <path d="M586 548L730 511.500V547.500L586 584z" fill={violet} />
        <path d="M732.500 358L742.500 356V545L738 548 730 548V511.500L732.500 510.500z" fill={violet} />
        <path d="M576 396L586 397V584L575.500 588z" fill={violet} />
        <path d="M577 298L582.500 300.500V398L577 394.500z" fill={cream} />
        <path d="M582.500 300.500L747.500 259V355.500L582.500 398z" fill={violet} />
      </g>
      <g fill="none" stroke="#fff" strokeWidth="2" strokeLinejoin="round">
        <path d="M475.500 221L644 178 749.500 246V257.500H747.500V355.500L742.500 357V545L738 548H730L586 584 580 587 575 588 476 523.500z" strokeWidth="1.500" />
        <path d="M476 233L577 298 582.500 300.500 749 257.500M577 298V394.500L582.500 398 747.500 355.500M586 397V584M586 548L732.500 510.500M732.500 360V510.500M730 511.500V547" strokeWidth="1.500" />
      </g>
      <path d="M481 528v3l16 10h5M554.500 574v3l15 11h5" fill="none" stroke="#fff" strokeWidth="1.200" />
      <path d="M482 529.500l17 11M555.500 575.500l17 12" stroke="#c76a6a" strokeWidth="1.200" />
      <circle cx="665.500" cy="329" r="8" fill="#c4c4cc" stroke="#fff" strokeWidth="1.300" />
      <circle cx="670.500" cy="331.500" r="8.500" fill="url(#knob)" stroke="#fff" strokeWidth="1.300" />
      <ellipse cx="673" cy="333.500" rx="2.800" ry="2.500" fill="none" stroke="#fff" />
    </svg>
  );
}

function ViewCube() {
  return (
    <svg viewBox="1084 168 108 84" className="absolute right-[9px] top-[29px] w-[108px] h-[84px]" role="img" aria-label="View cube" fontFamily="Liberation Sans, sans-serif" fontWeight="bold">
      <ellipse cx="1138" cy="223" rx="43" ry="18" fill="none" stroke="#434b54" strokeWidth="9" />
      <text x="1168" y="212" fontSize="10" fill="#8b9095" transform="rotate(15 1172 208)">E</text>
      <path d="M1113.500 181L1143 175.500 1163.500 186 1133 193.500z" fill="#bdbdbd" />
      <path d="M1113.500 181L1133 193.500V228L1115.500 215.500z" fill="#adadad" />
      <path d="M1133 193.500L1163.500 186 1162.500 218.500 1133 228z" fill="#cfcfcf" />
      <path d="M1113.500 181L1133 193.500 1163.500 186M1133 193.500V228" fill="none" stroke="#444" strokeDasharray="5 2" />
      <text x="1148" y="210" textAnchor="middle" fontSize="8" fill="#3c3c3c" transform="rotate(-6 1148 207)">TOP</text>
      <text x="1123" y="207" textAnchor="middle" fontSize="7" fill="#4a4a4a" transform="rotate(-84 1123 204)">LEFT</text>
      <text x="1139" y="187" textAnchor="middle" fontSize="7" fill="#4a4a4a" transform="rotate(172 1139 184.500)">BACK</text>
      <text x="1090" y="236" fontSize="14" fill="#c3c5c8" transform="rotate(-22 1097 231)">W</text>
      <text x="1161" y="244" fontSize="14" fill="#c3c5c8" transform="rotate(22 1166 239)">S</text>
    </svg>
  );
}

function NavBar() {
  return (
    <div role="toolbar" aria-label="Navigation" className="absolute right-1 top-[167px] w-[29px] rounded-sm bg-[#5c6167] border border-[#6b7076]">
      <svg viewBox="0 0 27 193" className="w-full block" fill="none" stroke="#42474c" strokeWidth="1.200" aria-hidden="true">
        <circle cx="23" cy="5" r="3" />
        <path d="M14 17a10 10 0 1 0 10 10V17z" /><circle cx="14" cy="27" r="6" />
        <path d="M12 45h4l-2 2.500z" fill="#42474c" />
        <path d="M1 53h25" stroke="#6b7076" />
        <path d="M10 76c-1-4-5-7-6-10 2-1 3 1 5 3L7 60c2-2 3 0 3.500 2l1 4 .5-8c1-1.500 2.500-1 2.500.5l.5 7 2-7c1-1.300 2.500-.5 2.300 1l-1.300 7.500 3.500-5c1.500-.5 2 .7 1.500 2L19 71c-.7 2-1 3-1.200 5" />
        <path d="M4 83l14 14M18 83L4 97M4 87v-4h4M14 83h4v4M4 93v4h4" /><circle cx="19" cy="97" r="4" /><path d="M22 100l4 4" />
        <path d="M12 109h4l-2 2.500z" fill="#42474c" />
        <path d="M14 117v20M11 120l3-3 3 3" /><ellipse cx="14" cy="128" rx="9" ry="4" /><path d="M10 117v18h7v-18" />
        <path d="M12 145h4l-2 2.500z" fill="#42474c" />
        <path d="M3 155h5v5H3zM11 155h5v5h-5zM19 155h5v5h-5zM3 163h15v13H3z" /><path d="M8 166v7l6-3.500z" fill="#42474c" />
        <circle cx="23" cy="188" r="3" /><path d="M21.500 187.500h3l-1.500 2z" />
      </svg>
    </div>
  );
}

function Canvas() {
  return (
    <main className="relative flex-1 min-w-0 bg-[#212830] overflow-hidden">
      <p className="absolute left-[3px] top-1 text-[11px] leading-4 text-[#e2e4e6]">[−][Custom View][Conceptual]</p>
      <Nightstand />
      <ViewCube />
      <button className="absolute right-[33px] top-[128px] w-[62px] h-[15px] px-[3px] flex items-center justify-between rounded-sm bg-[#8e939b] border border-[#b4b8bd] text-[9px] leading-none text-[#33383e]">
        Unnamed
        <svg viewBox="0 0 9 5" className="w-2 h-[5px]"><path d="M1 .5h7L4.500 4z" fill="none" stroke="#b9bdc4" /></svg>
      </button>
      <NavBar />
      <svg viewBox="118 565 58 80" className="absolute left-10 bottom-[27px] w-[58px] h-20" role="img" aria-label="UCS icon">
        <path d="M124 624V586" stroke="#3b9a45" strokeWidth="4.500" strokeLinecap="round" />
        <path d="M125 624V587" stroke="#76c97c" strokeWidth="1" />
        <path d="M125 625l37-9" stroke="#b3484c" strokeWidth="4" strokeLinecap="round" />
        <path d="M127 623.500l34-8.500" stroke="#dd8688" strokeWidth="1" />
        <path d="M124 625l24 15" stroke="#2f68c4" strokeWidth="4.500" strokeLinecap="round" />
        <path d="M122.500 569.500l5 5 5.500-5M127.500 574.500v6" stroke="#2fa03c" fill="none" />
        <path d="M160.500 600.500l10.500 11M171 600.500l-10.500 11" stroke="#c23a3a" />
        <path d="M146.500 626h11l-11 11h11" stroke="#2f68c4" fill="none" />
      </svg>
      <div className="absolute bottom-0 left-1/2 -translate-x-1/2 w-[291px] h-[24px] flex border border-[#6d7277] bg-[#bfc0c2]">
        <div className="w-[49px] shrink-0 flex items-center pl-[2px] bg-linear-to-b from-[#6b6b6b] to-[#434343]">
          <span className="w-[5px] h-4 border-x-2 border-dotted border-[#9a9a9a]" />
          <button aria-label="close command line" className="ml-[5px]"><svg viewBox="0 0 9 9" className="w-[9px] h-[9px]"><path d="M1 1l7 7M8 1L1 8" stroke="#ddd" strokeWidth="1.800" /></svg></button>
          <button aria-label="customize command line" className="ml-[10px]"><svg viewBox="0 0 12 12" className="w-3 h-3"><path d="M4 4l6.500 6.500" stroke="#ddd" strokeWidth="2.400" strokeLinecap="round" /><path d="M1 2.500A3 3 0 1 0 4 .8L4 3.500 2.500 4z" fill="#ddd" /></svg></button>
        </div>
        <button aria-label="recent commands" className="flex items-center gap-1 pl-1 shrink-0">
          <svg viewBox="0 0 14 13" className="w-[14px] h-[13px]"><path d="M.5.5h13v12H.5z" fill="#a4acb5" stroke="#5f6974" /><path d="M2.500 4l3 2.500-3 2.500M7 9.500h4.500" stroke="#2c3a4a" fill="none" strokeWidth="1.300" /></svg>
          <svg viewBox="0 0 8 5" className="w-[5px] h-[3px]"><path d="M0 0h8L4 5z" fill="#555" /></svg>
        </button>
        <input aria-label="Command" placeholder="Type a command" className="flex-1 min-w-0 pl-[6px] bg-transparent font-['Liberation_Mono',monospace] italic text-[11px] text-[#333] placeholder:text-[#77787a] outline-none" />
        <button aria-label="command history" className="w-4 shrink-0 flex items-center justify-center"><svg viewBox="0 0 8 5" className="w-[7px] h-1"><path d="M0 5h8L4 0z" fill="#111" /></svg></button>
      </div>
    </main>
  );
}

const Stat = ({ label, children, w = "w-[22px]" }: { label: string; children: ReactNode; w?: string }) => (
  <button aria-label={label} className={`${w} h-full shrink-0 flex items-center justify-center`}>
    <svg viewBox="0 0 16 16" className="w-4 h-4" fill="none" stroke="#c9c9c9" strokeWidth="1.200">{children}</svg>
  </button>
);
const StatDrop = ({ w = "w-[14px]" }) => <button aria-label="options" className={`${w} h-full shrink-0 flex items-center justify-center`}><Drop /></button>;

const person = "M8 .5c1.800 3 1.500 6 2.500 8.500l5 6-5.500-2L8 15.500 6 13 .5 15l5-6C6.500 6.500 6.200 3.500 8 .5z";

function StatusBar() {
  const cell = "h-6 shrink-0 flex items-center bg-[#4c4c4c] border border-[#7a7a7a]";
  return (
    <footer className="flex items-start h-[26px] shrink-0 bg-[#383838] pr-px">
      <div className="flex flex-1 pl-[11px] h-[17px] leading-4 text-[11px] text-[#b9b9b9]">
        <button className="w-[53px] font-bold text-white bg-linear-to-b from-[#606060] to-[#8a8a8a] [clip-path:polygon(0_0,100%_0,93%_75%,86%_100%,14%_100%,7%_75%)]">Model</button>
        <button className="w-[60px] bg-[#585858] [clip-path:polygon(0_0,100%_0,94%_75%,88%_100%,12%_100%,4%_75%)]">Layout1</button>
        <button className="w-[60px] bg-[#585858] [clip-path:polygon(0_0,100%_0,94%_75%,88%_100%,12%_100%,4%_75%)]">Layout2</button>
        <button aria-label="new layout" className="w-[23px] ml-px h-4 flex items-center justify-center bg-[#585858] [clip-path:polygon(0_90%,20%_0,100%_0,80%_100%,5%_100%)]"><svg viewBox="0 0 8 8" className="w-2 h-2"><path d="M4 0v8M0 4h8" stroke="#d0d0d0" strokeWidth="1.600" /></svg></button>
      </div>
      <div className="flex gap-px pt-px">
        <button className={`${cell} w-[46px] justify-center text-[11px] text-white`}>MODEL</button>
        <div className={`${cell} w-[60px]`}>
          <Stat label="grid"><path d="M3.500 2v12M6.500 2v12M9.500 2v12M12.500 2v12M2 3.500h12M2 6.500h12M2 9.500h12M2 12.500h12" strokeWidth=".8" /></Stat>
          <Stat label="snap"><path d="M2 2.500h13M2 5.500h13M2 8.500h13M2 11.500h13M2 14.500h13" strokeDasharray="1 2" /></Stat>
          <StatDrop />
        </div>
        <div className={`${cell} w-[95px]`}>
          <Stat label="ortho"><path d="M4 2v11h10M4 9h4v4" stroke="#2f8cf0" strokeWidth="1.500" /></Stat>
          <Stat label="polar"><circle cx="7.500" cy="8" r="5.500" /><path d="M7.500 8H15M7.500 8l4-5" /></Stat>
          <StatDrop />
          <Stat label="isometric"><path d="M1 1l13 13M7.500 0v9M7 8l-4 5" /></Stat>
          <StatDrop />
        </div>
        <div className={`${cell} w-[60px]`}>
          <Stat label="object tracking"><path d="M1.500 13.500h13M2 13L13 3" stroke="#2f8cf0" strokeWidth="1.600" /></Stat>
          <Stat label="object snap"><path d="M5 4h9v10H3V6" stroke="#2f8cf0" strokeWidth="1.600" /><path d="M1.500 1h4v4h-4z" fill="#1d8a2b" stroke="#0c4a14" /></Stat>
          <StatDrop />
        </div>
        <div className={`${cell} w-[98px]`}>
          <Stat label="annotation visibility"><path d={person} fill="#2f8cf0" stroke="none" /><circle cx="11.500" cy="4" r="2.500" stroke="#2f8cf0" /><path d="M3 3l4 4" stroke="#2f8cf0" strokeWidth="2" /></Stat>
          <Stat label="auto scale"><path d={person} fill="#c9c9c9" stroke="none" /><path d="M3 2l4 5M13 2l-3 4h4l-3 4" /></Stat>
          <Stat label="annotation scale"><path d={person} fill="#c9c9c9" stroke="none" /></Stat>
          <button className="flex items-center gap-1 text-[11px] text-white">1:1<Drop /></button>
        </div>
        <div className={`${cell} w-9`}>
          <Stat label="workspace switching"><circle cx="8" cy="8" r="3.200" strokeWidth="2.800" /><g fill="#c9c9c9" stroke="none"><path d="M7 2h2v2.500H7zM7 11.500h2V14H7zM2 7h2.500v2H2zM11.500 7H14v2h-2.500z" /><g transform="rotate(45 8 8)"><path d="M7 2h2v2.500H7zM7 11.500h2V14H7zM2 7h2.500v2H2zM11.500 7H14v2h-2.500z" /></g></g></Stat>
          <StatDrop w="w-3" />
        </div>
        <div className={`${cell} w-[23px]`}><Stat label="annotation monitor" w="w-[21px]"><path d="M8 2v12M2 8h12" strokeWidth="1.600" /></Stat></div>
        <div className={`${cell} w-6`}><Stat label="isolate"><path d="M1.500 2h5v5h-5zM8 9l2.500 5h-6z" /><circle cx="12" cy="7" r="2.500" /></Stat></div>
        <div className={`${cell} w-[23px]`}><Stat label="hardware" w="w-[21px]"><circle cx="8" cy="8" r="7" fill="#0f62b5" stroke="#1d82e0" /><path d="M6 10l5-4" stroke="#4fb0ff" /></Stat></div>
        <div className={`${cell} w-[22px]`}><Stat label="trusted" w="w-5"><path d="M1 8h11v6H3z" fill="#e9dc4b" stroke="none" /><path d="M5 2.500c2-2 7-.5 7 3V9H5z" fill="#4a8fd8" stroke="none" /><path d="M2 2h5v6H2z" fill="#dce6f2" stroke="none" /><path d="M8 5h5v3H8z" fill="#dce6f2" stroke="none" /><path d="M7 11l3 3 5-6" stroke="#52c234" strokeWidth="2" /></Stat></div>
        <div className={`${cell} w-[45px]`}>
          <Stat label="clean screen"><path d="M1 2.500h14v11H1z" /><path d="M9 5h4v3.500M13 5L9.500 8M7 11.500H3V8M3 11.500L6.500 8.500" /></Stat>
          <Stat label="customization" w="w-[21px]"><path d="M1 3.500h14M1 8h14M1 12.500h14" strokeWidth="1.800" /></Stat>
        </div>
      </div>
    </footer>
  );
}

// sliver of the PDF reader window behind the editor
function ReaderWindow() {
  return (
    <aside className="w-6 shrink-0 flex flex-col overflow-hidden bg-white text-[11px] text-[#222]">
      <div className="h-5 flex items-center gap-[5px] pl-[3px] shrink-0">
        <svg viewBox="0 0 12 12" className="w-3 h-3 shrink-0" aria-hidden="true"><path d="M1 0h8l3 3v9H1z" fill="#f6f3f2" stroke="#c9c4c2" strokeWidth=".6" /><path d="M0 0h9v6H0z" fill="#c9201d" /><path d="M3 10c2-2 3-5 3-7 1 3 2 4 5 5-3 0-5 .5-8 2z" fill="none" stroke="#c9201d" /></svg>
        K
      </div>
      <div className="h-[18px] leading-[16px] pl-[6px] shrink-0">Dos</div>
      <div className="h-[34px] shrink-0 flex items-center pl-3 bg-[#e9e9e9] border-y border-[#d4d4d4] text-sm font-bold text-[#4a4a4a]">A</div>
      <div className="h-[43px] shrink-0 flex items-center pl-[14px] bg-[#f7f7f7]">
        <svg viewBox="0 0 16 16" className="w-4 h-4 shrink-0" fill="none" stroke="#8f8f8f" strokeWidth="1.300" aria-hidden="true"><path d="M1 1h11l3 3v11H1zM4 1v5h7V1M4 15V9h8v6" /></svg>
      </div>
      <div className="flex-1 flex">
        <div className="w-[11px] flex items-center justify-center bg-[#e0e0e0]"><svg viewBox="0 0 5 10" className="w-[5px] h-[10px]"><path d="M0 0l5 5-5 5z" fill="#6a6a6a" /></svg></div>
        <div className="flex-1 bg-[#979797]" />
      </div>
    </aside>
  );
}

export default function App() {
  return (
    <div className="h-screen py-[22px] bg-black flex font-['Open_Sans','Noto_Sans',sans-serif]">
      <div className="flex-1 min-w-0 flex flex-col bg-[#5d5d5d]">
        <Header />
        <FileTabs />
        <Toolbars />
        <div className="flex-1 min-h-0 flex items-stretch">
          <div className="w-[78px] shrink-0 flex items-start gap-[3px]">
            <Palette label="Draw" items={drawTools} height="h-[414px]" />
            <Palette label="Modeling" items={modelTools} height="h-[470px]" />
            <div className="flex flex-col">
              <Palette label="View" items={viewTools} height="h-[294px]" />
              <Palette label="Visual styles" items={styleTools} height="h-[140px]" end />
            </div>
          </div>
          <Canvas />
          <div className="w-[55px] shrink-0 flex items-start gap-[3px] pl-[3px]">
            <Palette label="Solid editing" items={solidTools} height="h-[429px]" />
            <Palette label="Modify" items={modifyTools} height="h-[372px]" />
          </div>
        </div>
        <StatusBar />
      </div>
      <ReaderWindow />
    </div>
  );
}
